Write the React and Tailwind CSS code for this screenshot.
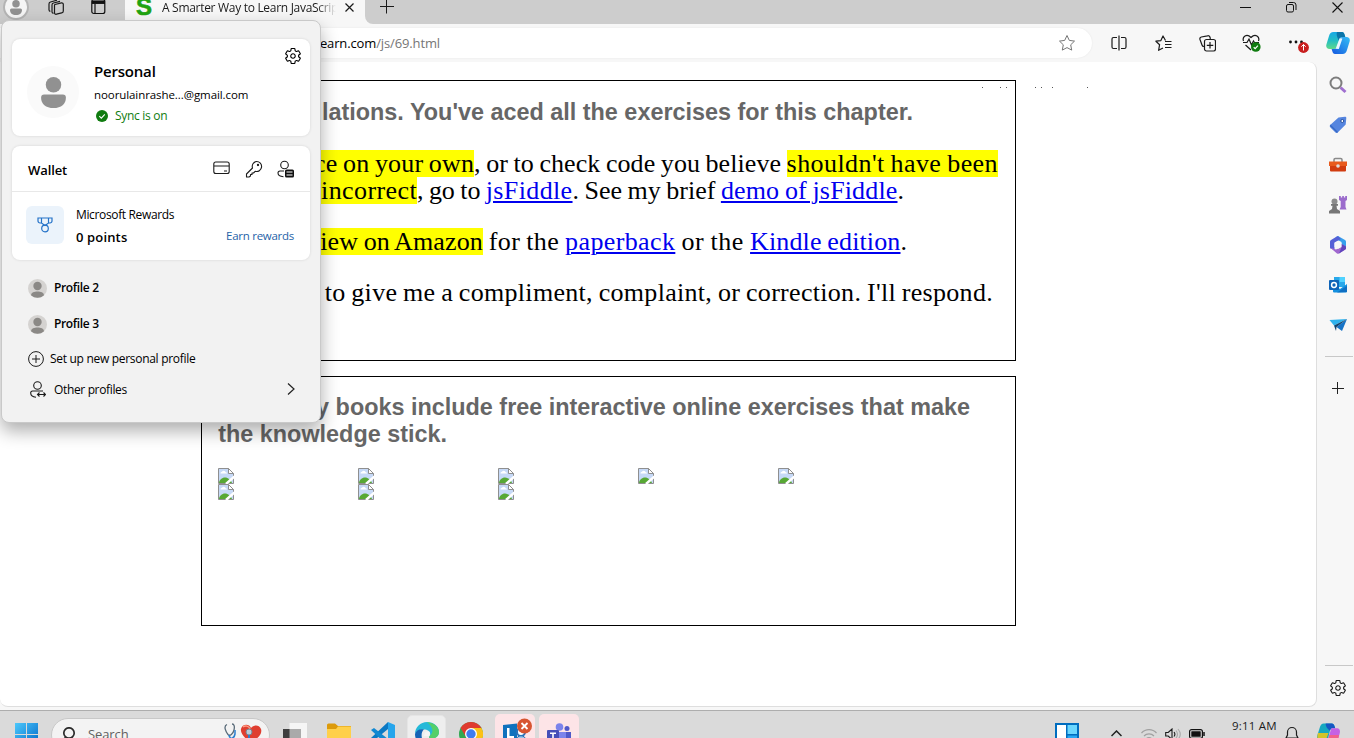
import React from "react";
import { IoSettingsOutline } from "react-icons/io5";

const ui = "font-['Open_Sans','Noto_Sans',sans-serif]";

function Avatar({ className }) {
  return (
    <svg className={className} viewBox="0 0 24 30">
      <circle cx="12" cy="7.500" r="7.500" fill="#919191" />
      <path d="M3 17h18a3 3 0 0 1 3 3c0 6-4.500 10-12 10S0 26 0 20a3 3 0 0 1 3-3z" fill="#919191" />
    </svg>
  );
}

function SmallAvatar() {
  return (
    <svg className="h-[19px] w-[19px] shrink-0" viewBox="0 0 19 19">
      <circle cx="9.500" cy="9.500" r="9.500" fill="#d5d3d1" />
      <circle cx="9.500" cy="7" r="4.200" fill="#8b8986" />
      <path d="M3 16.300a9.500 9.500 0 0 0 13 0C15.500 13.300 13 12.600 9.500 12.600S3.500 13.300 3 16.300z" fill="#8b8986" />
    </svg>
  );
}

function Copilot({ className }) {
  return (
    <svg className={className} viewBox="0 0 24 24">
      <defs>
        <linearGradient id="cpA" x1="0" y1="0" x2="0" y2="1">
          <stop offset="0" stopColor="#17a8e6" />
          <stop offset=".5" stopColor="#22bdc4" />
          <stop offset="1" stopColor="#5fd98a" />
        </linearGradient>
        <linearGradient id="cpB" x1="1" y1="0" x2="0" y2="1">
          <stop offset="0" stopColor="#35bdf5" />
          <stop offset="1" stopColor="#1659e0" />
        </linearGradient>
      </defs>
      <path d="M7.500 1h8.500c1.500 0 2 1 2.500 2.500L19.300 6h-3c-1.500 0-2.200.8-2.700 2.300l-2.400 7.200c-.6 1.700-1.600 2.500-3.200 2.500H3.500C.8 18-.3 16 .4 13.400L3 5C3.800 2.300 5 1 7.500 1z" fill="url(#cpA)" />
      <path d="M11 1h5c1.500 0 2 1 2.500 2.500L19.300 6h-3c-1.500 0-2.200.8-2.700 2.300L13 10C11 6 10 3 11 1z" fill="#0b74a8" />
      <path d="M16.500 23H9c-1.500 0-2.200-1-2.600-2.500L5.600 18H8c1.600 0 2.600-.8 3.200-2.500l2.400-7.200C14.100 6.800 14.800 6 16.300 6h4.200c2.700 0 3.800 2 3.100 4.600L21 19c-.8 2.700-2 4-4.500 4z" fill="url(#cpB)" />
      <path d="M9.700 17.800L13.600 7.200l2.800.2-3.600 10.600z" fill="#e9f7ff" />
    </svg>
  );
}

function TabBar() {
  return (
    <div className="flex h-6 shrink-0 overflow-hidden bg-[#f7f7f7]">
      <div className="flex w-[125px] gap-[18px] bg-[#cdcdcd] pl-[3px]">
        <div className="-mt-[6px] flex h-[26px] w-[26px] shrink-0 items-center justify-center rounded-full border-2 border-[#b4b4b4] bg-[#f5f5f5]">
          <Avatar className="h-[15px] w-[12px]" />
        </div>
        <svg className="h-4 w-[18px] shrink-0" viewBox="0 0 18 16" fill="none" stroke="#1b1b1b" strokeWidth="1.200">
          <path d="M8 4.500l6.500-1.600a1.500 1.500 0 0 1 1.800 1.500v6.500a2 2 0 0 1-1.600 2L9.500 14.200a1.500 1.500 0 0 1-2-1.500V5.500a1 1 0 0 1 .5-1zM5 12.500V5a2 2 0 0 1 1.500-2L13 1.300M2 10.500V4a2 2 0 0 1 1.500-2L10 .2M5 12.500l1.500 1M2 10.500l1.300 1" />
        </svg>
        <svg className="ml-[8px] h-[15px] w-[15px] shrink-0" viewBox="0 0 15 15" fill="none" stroke="#111" strokeWidth="1.200">
          <rect x=".8" y="-.5" width="13" height="14" rx="2" />
          <path d="M1 2.200h13" strokeWidth="3.500" />
          <path d="M4 4v9" />
        </svg>
      </div>
      <div className="flex w-[240px] pl-[11px] text-[#1b1b1b]">
        <div className="-mt-[9px] h-[30px] w-[19px] font-['Liberation_Sans',sans-serif] text-[24px] leading-[32px] font-bold text-[#1fa30f] [-webkit-text-stroke:0.6px_#1fa30f]">S</div>
        <div className={`${ui} ml-[7px] h-6 w-[174px] overflow-hidden text-[12px] leading-[15px] tracking-[-0.3px] whitespace-nowrap [mask-image:linear-gradient(to_right,black_155px,transparent)]`}>A Smarter Way to Learn JavaScript</div>
        <svg className="mt-[3px] ml-[9px] h-[9px] w-[9px]" viewBox="0 0 9 9" stroke="#1b1b1b" strokeWidth="1.200"><path d="M.5.500l8 8M8.500.500l-8 8" /></svg>
      </div>
      <div className="flex flex-1 rounded-bl-[8px] bg-[#cdcdcd] pl-[15px]">
        <svg className="h-[14px] w-[14px]" viewBox="0 0 14 14" stroke="#1b1b1b" strokeWidth="1"><path d="M0 6.500h14M6.500 0v13.500" /></svg>
        <svg className="mt-[2px] ml-auto h-[11px] w-[11px]" viewBox="0 0 11 11" stroke="#111" strokeWidth="1"><path d="M0 5.500h11" /></svg>
        <svg className="mt-px ml-[35px] h-[12px] w-[11px]" viewBox="0 0 11 12" fill="none" stroke="#111"><rect x=".5" y="3.500" width="7" height="7.500" rx="1.500" /><path d="M3 1.500h4.500a2.500 2.500 0 0 1 2.500 2.500v5" /></svg>
        <svg className="mt-[2px] mr-[11px] ml-[35px] h-[11px] w-[11px]" viewBox="0 0 11 11" stroke="#111" strokeWidth="1.100"><path d="M.5.500l10 10M10.500.500l-10 10" /></svg>
      </div>
    </div>
  );
}

function ToolBar() {
  return (
    <div className="flex h-[38px] shrink-0 items-center bg-[#f7f7f7]">
      <div className="flex h-[30px] w-[1092px] items-center rounded-r-full bg-white pr-[16px] shadow-[0_0_2px_rgba(0,0,0,0.08)]">
        <div className={`${ui} mt-[2px] w-[440px] text-right text-[13px] tracking-[-0.13px] whitespace-nowrap text-black`}>
          www.asmarterwaytolearn.com<span className="text-[#767676]">/js/69.html</span>
        </div>
        <svg className="ml-auto h-[18px] w-[18px]" viewBox="0 0 18 18" fill="none" stroke="#767676" strokeLinejoin="round"><path d="M9 1.500l2.300 4.900 5.200.7-3.800 3.700 1 5.300L9 13.600l-4.700 2.500 1-5.300L1.500 7.100l5.200-.7z" /></svg>
      </div>
      <div className="flex flex-1 items-center pl-[5px] text-[#1b1b1b]">
        <div className="flex w-[44px] justify-center">
          <svg className="h-4 w-4" viewBox="0 0 16 16" fill="none" stroke="#1b1b1b" strokeWidth="1.200"><path d="M6 2.500H2.500a1.500 1.500 0 0 0-1.500 1.500v8a1.500 1.500 0 0 0 1.500 1.500H6M10 2.500h3.500A1.500 1.500 0 0 1 15 4v8a1.500 1.500 0 0 1-1.500 1.500H10M8 .5v15" /></svg>
        </div>
        <div className="flex w-[45px] justify-center">
          <svg className="h-[17px] w-[17px]" viewBox="0 0 17 17" fill="none" stroke="#1b1b1b" strokeWidth="1.200" strokeLinejoin="round"><path d="M10.500 5.500L8 1 5.900 5.600l-5 .6 3.700 3.500-1 5.600L8 13M10 6.500h6.500M10 9.500h6.500M10 12.500h6.500" /></svg>
        </div>
        <div className="flex w-[43px] justify-center">
          <svg className="h-[17px] w-[17px]" viewBox="0 0 17 17" fill="none" stroke="#1b1b1b" strokeWidth="1.200"><path d="M5 11.500a2 2 0 0 1-2-1.500L1 4.500A2 2 0 0 1 2.300 2L8.500.8A2 2 0 0 1 11 2.500l.4 1.500" /><rect x="5.500" y="4.500" width="11" height="11.500" rx="2" /><path d="M11 7v6.500M7.800 10.300h6.500" /></svg>
        </div>
        <div className="flex w-[45px] justify-center">
          <svg className="h-[18px] w-[19px]" viewBox="0 0 19 18" fill="none" stroke="#1b1b1b" strokeWidth="1.200"><path d="M1.500 7C0 3 4.500-1 9 3.500 13.500-1 18 3 16.500 7M1 8.500h4L7 5l2.500 6L11.500 7l1 1.500H17M3.500 11l5.500 5" /><circle cx="13.800" cy="13" r="4.800" fill="#107c10" stroke="none" /><path d="M11.700 13.200l1.500 1.400 2.700-3" stroke="#fff" /></svg>
        </div>
        <svg className="ml-[13px] h-[20px] w-[22px] shrink-0" viewBox="0 0 22 20"><circle cx="3.500" cy="9" r="1.400" fill="#111" /><circle cx="9" cy="9" r="1.400" fill="#111" /><circle cx="14.500" cy="9" r="1.400" fill="#111" /><circle cx="16.500" cy="14.500" r="5.400" fill="#c81f1f" /><path d="M16.500 17.500v-6M14.300 13.700l2.200-2.200 2.200 2.200" stroke="#fff" fill="none" /></svg>
        <Copilot className="ml-[17px] h-6 w-6 shrink-0" />
      </div>
    </div>
  );
}

function BrokenImage() {
  return (
    <svg className="block h-4 w-4" viewBox="0 0 16 16">
      <path d="M.5.500h10l5 5v10H.5z" fill="#c6d9f7" stroke="#8f8f8f" />
      <path d="M10.500.500v5h5z" fill="#fff" stroke="#8f8f8f" />
      <path d="M2.500 5.500a1.500 1.500 0 0 1 1.500-1.700 2 2 0 0 1 3.700.4c1 0 1.300.6 1.300 1.300z" fill="#fff" />
      <path d="M1 15c0-3 3-5.500 6-5.500S13 12 14 15z" fill="#57a834" />
      <path d="M8 16L16.500 8.500" stroke="#fff" strokeWidth="2.500" />
    </svg>
  );
}

const head = "flex h-[27px] justify-end whitespace-nowrap font-['Liberation_Sans',sans-serif] text-[23.4px] font-bold leading-[27px] text-[#666]";
const line = "flex h-[27px] justify-end whitespace-pre font-['Liberation_Serif',serif] text-[26px] leading-[27px] text-black [word-spacing:-1px]";
const link = "text-[#0000ee] underline decoration-2 underline-offset-[2px]";

function Page() {
  return (
    <main className="relative w-[1317px] rounded-r-[8px] rounded-bl-[8px] border-r border-b border-[#dedede] bg-white pt-[18px] pl-[201px]">
      <section className="h-[281px] w-[815px] border border-black px-4 pt-[18px]">
        <div className={`${head} w-[695px]`}>Congratulations. You've aced all the exercises for this chapter.</div>
        <div className={`${line} mt-6 w-[780px]`}>
          <span className="bg-[#ff0] tracking-[0.15px]">To practice on your own</span><span className="tracking-[0.06px]">, or to check code you believe </span><span className="bg-[#ff0] tracking-[0.42px]">shouldn't have been</span>
        </div>
        <div className={`${line} w-[686px]`}>
          <span className="bg-[#ff0] tracking-[0.4px]">marked incorrect</span><span className="tracking-[-0.06px]">, go to </span><a className={`${link} tracking-[0.37px]`}>jsFiddle</a><span>. See my brief </span><a className={`${link} tracking-[0.15px]`}>demo of jsFiddle</a><span>.</span>
        </div>
        <div className={`${line} mt-6 w-[689px]`}>
          <span className="bg-[#ff0] tracking-[0.12px]">Write a review on Amazon</span><span className="tracking-[0.4px]"> for the </span><a className={`${link} tracking-[0.38px]`}>paperback</a><span className="tracking-[0.6px]"> or the </span><a className={`${link} tracking-[0.14px]`}>Kindle edition</a><span>.</span>
        </div>
        <div className={`${line} mt-6 w-[775px] tracking-[0.3px]`}>Email me to give me a compliment, complaint, or correction. I'll respond.</div>
      </section>
      <section className="mt-[15px] h-[250px] w-[815px] border border-black px-4 pt-[17px]">
        <div className={`${head} w-[752px]`}>All of my books include free interactive online exercises that make</div>
        <div className={`${head} w-[229px]`}>the knowledge stick.</div>
        <div className="mt-5 grid w-[700px] grid-cols-5">
          {[0, 1, 2, 3, 4, 5, 6, 7].map((i) => <BrokenImage key={i} />)}
        </div>
      </section>
      <svg className="absolute top-[25px] left-[982px] h-px w-[106px]" viewBox="0 0 106 1">
        <path d="M0 .5h1M18 .5h1M24 .5h1M53 .5h1M59 .5h1M70 .5h1M105 .5h1" stroke="#555" />
      </svg>
    </main>
  );
}

function SideBar() {
  const row = "flex h-10 shrink-0 items-center justify-center";
  const ic = "h-[18px] w-[18px]";
  return (
    <aside className="flex flex-1 flex-col bg-[#f7f7f7] pt-[3px] pl-[5px]">
      <div className={row}><svg className={`${ic} -mt-px`} viewBox="0 0 18 18" fill="none"><path d="M11.500 11.500l5 4.500" stroke="#a06fd0" strokeWidth="3" /><circle cx="7" cy="7" r="5.500" stroke="#7d7d7d" strokeWidth="2" /></svg></div>
      <div className={row}><svg className={ic} viewBox="0 0 18 18"><path d="M9.500 1.500L16 .8a1.200 1.200 0 0 1 1.300 1.300l-.6 6.400-8 8a1.500 1.500 0 0 1-2.200 0L1.200 11.200a1.500 1.500 0 0 1 0-2.200z" fill="#5585df" /><path d="M1 10l7 6.800 1-.7-7.500-7.500z" fill="#3668c4" /><circle cx="13.300" cy="5" r="1.500" fill="#fff" stroke="#204b9b" /></svg></div>
      <div className={row}><svg className={ic} viewBox="0 0 18 18"><path d="M5 6V3.800A1.300 1.300 0 0 1 6.300 2.500h5.400A1.300 1.300 0 0 1 13 3.800V6" fill="none" stroke="#8a8a8a" strokeWidth="1.500" /><path d="M0 5.500h18V10H0z" fill="#e85a1d" /><path d="M1 10h16v4.500a1 1 0 0 1-1 1H2a1 1 0 0 1-1-1z" fill="#d13c10" /><circle cx="9" cy="10" r="1.800" fill="#dedede" /></svg></div>
      <div className={row}><svg className={ic} viewBox="0 0 18 18"><path d="M10 0h1.800v1.500h1.400V0h1.700v1.500h1.300V0H18v4l-1.500 1v6l1 2.500h-7l1.200-2.500V5L10 4z" fill="#9b6ccc" /><circle cx="5.500" cy="5.500" r="3" fill="#8b8b8b" /><path d="M2 8h7v1.800H7.500L8 13l3 2v2.500H0V15l3-2 .5-3.200H2z" fill="#777" /></svg></div>
      <div className={row}><svg className={ic} viewBox="0 0 18 18"><path d="M9 0l7 4a2 2 0 0 1 1 1.800V11l-4.500-2.600V6L6 2.500C7 1 8 .3 9 0z" fill="#36a0ed" /><path d="M7 1L2 4a2 2 0 0 0-1 1.800v6.400L5.500 14V6.500L12 3 9.500.5C8.500 0 8 .4 7 1z" fill="#5460d6" /><path d="M1 11.500L8 17.400a2 2 0 0 0 2 0l6-3.600a2 2 0 0 0 1-1.800v-1.500L12.500 8v2.500L7 13.500z" fill="#a068cf" /><path d="M12.500 8l4.500 2.500V13l-7 4.500 2.500-6z" fill="#6046bd" /><path d="M9 5l3.500 2v4L9 13l-3.500-2V7z" fill="#f7f7f7" /></svg></div>
      <div className={row}><svg className={ic} viewBox="0 0 18 18"><path d="M5 1h11v10H5z" fill="#28a8ea" /><path d="M10.500 1H16v5h-5.500z" fill="#50d2ff" /><path d="M4 8l7 5 7-5v7.500a1 1 0 0 1-1 1H5a1 1 0 0 1-1-1z" fill="#1490df" /><path d="M8 16.500L18 10v6z" fill="#0f6fc3" /><rect x="0" y="4" width="10" height="10" rx="1" fill="#0f64b8" /><circle cx="5" cy="9" r="2.400" fill="none" stroke="#fff" strokeWidth="1.500" /></svg></div>
      <div className={row}><svg className={ic} viewBox="0 0 18 18"><path d="M.5 4L18 3 5 9.500z" fill="#2fb2ed" /><path d="M18 3L13 15 7.500 11z" fill="#1673c7" /><path d="M5 9.500L18 3 7.500 11 7 15z" fill="#11446f" /></svg></div>
      <div className="mt-[11px] ml-[3px] h-px w-[28px] shrink-0 bg-[#c8c8c8]" />
      <div className="mt-[11px] flex h-10 items-center justify-center"><svg className="h-3 w-3" viewBox="0 0 12 12" stroke="#222" strokeWidth="1"><path d="M0 6.500h12M5.500 0v12" /></svg></div>
      <div className="mt-auto ml-[3px] h-px w-[28px] shrink-0 bg-[#c8c8c8]" />
      <div className="-mb-[2px] flex h-[43px] items-center justify-center"><IoSettingsOutline className="h-[18px] w-[18px] text-[#1b1b1b]" /></div>
    </aside>
  );
}

function ProfileMenu() {
  return (
    <div className={`${ui} absolute top-[20px] left-[1px] flex h-[403px] w-[320px] flex-col rounded-[8px] border border-[#c9c9c9] bg-[#f2f2f2] px-[10px] pt-[18px] text-[12px] whitespace-nowrap text-black shadow-[0_8px_18px_rgba(0,0,0,0.32)]`}>
      <div className="flex h-[97px] shrink-0 rounded-[8px] bg-white pl-[15px] shadow-[0_0_3px_rgba(0,0,0,0.12)]">
        <div className="mt-[27px] flex h-[52px] w-[52px] items-center justify-center rounded-full bg-[#fafafa]"><Avatar className="h-[31px] w-[25px]" /></div>
        <div className="ml-[15px] pt-[22px]">
          <div className="text-[15px] leading-[21px] font-semibold tracking-[-0.2px]">Personal</div>
          <div className="mt-[5px] text-[11.500px] leading-[16px] tracking-[-0.08px]">noorulainrashe...@gmail.com</div>
          <div className="mt-[5px] flex items-center leading-[16px] tracking-[-0.3px] text-[#107c10]">
            <svg className="mr-[7px] ml-[2px] h-3 w-3" viewBox="0 0 12 12"><circle cx="6" cy="6" r="6" fill="#107c10" /><path d="M3.300 6.200l2 1.900 3.500-3.800" fill="none" stroke="#fff" strokeWidth="1.100" /></svg>Sync is on
          </div>
        </div>
        <IoSettingsOutline className="mt-[8px] mr-[8px] ml-auto h-[18px] w-[18px]" />
      </div>
      <div className="mt-[10px] h-[114px] shrink-0 rounded-[8px] bg-white shadow-[0_0_3px_rgba(0,0,0,0.12)]">
        <div className="flex h-[46px] items-center border-b border-[#e8e8e8] pr-4 pl-4">
          <span className="mt-[5px] text-[13px] font-semibold tracking-[-0.1px]">Wallet</span>
          <svg className="-mt-px ml-auto h-4 w-[17px]" viewBox="0 0 17 16" fill="none" stroke="#1b1b1b" strokeWidth="1.100"><rect x=".8" y="2" width="15.400" height="11.500" rx="2" /><path d="M1 6h15M11 11h3" /></svg>
          <svg className="ml-[15px] h-[18px] w-[18px]" viewBox="0 0 18 18" fill="none" stroke="#1b1b1b" strokeWidth="1.100" strokeLinejoin="round"><path d="M11.500 1.500a5 5 0 1 1-1.300 9.800L8.500 13H7v1.500H5.500V16L4 17H1.500v-3l6-6a5 5 0 0 1 4-6.500z" /><circle cx="13" cy="5" r=".6" fill="#111" /></svg>
          <svg className="ml-[14px] h-[18px] w-[17px]" viewBox="0 0 17 18" fill="none" stroke="#1b1b1b" strokeWidth="1.100"><circle cx="7.500" cy="5" r="3.800" /><path d="M7 11H3a2 2 0 0 0-2 2c0 2 2 3.500 5.500 3.700" /><rect x="8" y="9.500" width="9" height="8" rx="1.500" fill="#111" stroke="none" /><path d="M9.500 12h6M9.500 15h6" stroke="#fff" /></svg>
        </div>
        <div className="flex pt-[14px] pr-4 pl-[14px]">
          <div className="flex h-[38px] w-[38px] items-center justify-center rounded-[6px] bg-[#ebf3fb]">
            <svg className="-mt-px h-4 w-4" viewBox="0 0 16 16" fill="none" stroke="#2472c8" strokeWidth="1.200"><path d="M1 1h14v3a2 2 0 0 1-2 2h-1.500L8 8.500 4.500 6H3a2 2 0 0 1-2-2zM4.500 1v5M11.500 1v5" /><circle cx="8" cy="11.500" r="3.300" /></svg>
          </div>
          <div className="ml-3 pt-px">
            <div className="leading-[16px] tracking-[-0.35px]">Microsoft Rewards</div>
            <div className="mt-[5px] text-[13px] leading-[18px] font-semibold tracking-[0.15px]">0 points</div>
          </div>
          <div className="mt-[22px] ml-auto text-[11.500px] leading-[16px] tracking-[-0.27px] text-[#1f63a8]">Earn rewards</div>
        </div>
      </div>
      <div className="flex flex-col pl-4">
        <div className="mt-[19px] flex h-[18px] items-center gap-[7px] font-semibold tracking-[-0.35px]"><SmallAvatar />Profile 2</div>
        <div className="mt-[18px] flex h-[18px] items-center gap-[7px] font-semibold tracking-[-0.35px]"><SmallAvatar />Profile 3</div>
        <div className="mt-[17px] flex h-[18px] items-center gap-[6px] tracking-[-0.3px]">
          <svg className="-mt-px h-4 w-4" viewBox="0 0 16 16" fill="none" stroke="#1b1b1b"><circle cx="8" cy="8" r="7.400" /><path d="M8 4v8M4 8h8" /></svg>Set up new personal profile
        </div>
        <div className="mt-[13px] flex h-[18px] items-center pr-[15px] tracking-[-0.35px]">
          <svg className="-mt-px mr-[8px] ml-[2px] h-[17px] w-4" viewBox="0 0 16 17" fill="none" stroke="#1b1b1b" strokeWidth="1.100"><circle cx="7.500" cy="4.500" r="3.800" /><path d="M13 10H2.500A1.800 1.800 0 0 0 .7 12c0 2.500 2 4 5.300 4.300M7.500 13.500h8M9.500 11.500l-2 2 2 2M13.500 11.500l2 2-2 2" /></svg>Other profiles
          <svg className="-mt-[2px] ml-auto h-3 w-[8px]" viewBox="0 0 8 12" fill="none" stroke="#222" strokeWidth="1.200"><path d="M1 .5L7 6l-6 5.500" /></svg>
        </div>
      </div>
    </div>
  );
}

function TaskBar() {
  return (
    <footer className="flex h-[28px] shrink-0 overflow-hidden border-t border-[#adadad] bg-[#dadada]">
      <svg className="mt-3 ml-[15px] h-[23px] w-[23px] shrink-0" viewBox="0 0 23 23"><defs><linearGradient id="wn" x1="0" y1="0" x2="1" y2="1"><stop offset="0" stopColor="#4cc8fb" /><stop offset="1" stopColor="#0067c8" /></linearGradient></defs><path d="M0 0h11v11H0zM12 0h11v11H12zM0 12h11v11H0zM12 12h11v11H12z" fill="url(#wn)" /></svg>
      <div className="mt-[7px] ml-[13px] flex h-[34px] w-[219px] shrink-0 rounded-full border border-[#c8c8c8] bg-[#f3f3f3] pl-[10px]">
        <svg className="mt-[8px] h-[15px] w-[15px]" viewBox="0 0 15 15" fill="none" stroke="#2b2b2b" strokeWidth="1.700"><circle cx="7" cy="6" r="5.200" /><path d="M3.500 10.500L0 14" /></svg>
        <span className={`${ui} mt-[5px] ml-[11px] text-[13px] leading-[20px] tracking-[-0.1px] text-[#606060]`}>Search</span>
        <svg className="mt-[4px] ml-auto h-[20px] w-[39px]" viewBox="0 0 39 20" fill="none"><path d="M3 1.500C-1 3 2 9 4 11.500c2 2 5-.5 6-4.500.7-3 .5-6-2-6" stroke="#596b79" strokeWidth="1.300" /><path d="M5 12c1 5 5 4 6-1V7" stroke="#2b7fd0" strokeWidth="1.500" /><path d="M27 20c-5-4-11-9-10-14s8-6 10-1c2-3 8-4 10 1 2 6-6 11-10 14z" fill="#df3e30" /><path d="M19 4c2-2 6-1 7 2" stroke="#ff9d84" strokeWidth="1.500" /><circle cx="25" cy="9" r="3" fill="#bacbd7" stroke="#778690" /><path d="M25 12v7" stroke="#2b7fd0" strokeWidth="2" /></svg>
        <div className="w-[6px]" />
      </div>
      <svg className="mt-3 ml-[13px] h-6 w-6 shrink-0" viewBox="0 0 24 24"><path d="M6.500 0H24v17H6.500z" fill="#f5f5f5" /><path d="M0 6h18v17H0z" fill="#3f3f3f" /><path d="M6.500 6H18v11H6.500z" fill="#aaa" /></svg>
      <svg className="mt-3 ml-[20px] h-6 w-6 shrink-0" viewBox="0 0 24 24"><path d="M0 2a1.500 1.500 0 0 1 1.500-1.500H8L11 3h13v5H0z" fill="#dc9a0b" /><path d="M0 6h9l2-2.500h13V20H0z" fill="#ffd04a" /></svg>
      <svg className="mt-[11px] ml-[20px] h-6 w-6 shrink-0" viewBox="0 0 24 24"><path d="M17 0l7 3v18l-7 3z" fill="#26a5ec" /><path d="M17 0v7L3 18.500 0 16z" fill="#0b79c4" /><path d="M0 8l3-2 14 11v7z" fill="#1188d2" /></svg>
      <div className="mt-1 ml-[12px] flex h-[40px] w-[39px] shrink-0 justify-center rounded-[5px] border border-[#e5e5e5] bg-[#eeeeee] pt-[6px]">
        <svg className="h-6 w-6" viewBox="0 0 24 24"><path d="M12 0c7 0 12 4.500 12 10 0 4-3 6.500-7 6.500-3 0-3.500-1-2-3 1-4-2-6-6-6C4 7.500 1 9 0 12 0 5 5.500 0 12 0z" fill="#25b9d8" /><path d="M17 1.200C21 3 24 6 24 10c0 4-3 6.500-7 6.500-3 0-3.500-1-2-3C19 10 18 5 12 0z" fill="#54cf68" /><path d="M0 12c1-4 5-5.500 9-4.500-4 3-3 12 3 16.500C5 24 0 19 0 12z" fill="#1563b5" /><path d="M10 11c1-2 4-2 5 0l-1 3H9z" fill="#f5f5f5" /></svg>
      </div>
      <svg className="mt-[11px] ml-[13px] h-6 w-6 shrink-0" viewBox="0 0 24 24"><circle cx="12" cy="12" r="12" fill="#32a852" /><path d="M1.600 6A12 12 0 0 1 22.400 6H12L7 15z" fill="#df3a2e" /><path d="M22.400 6A12 12 0 0 1 12 24l5-9-5-9z" fill="#fbc116" /><circle cx="12" cy="12" r="6" fill="#fff" /><circle cx="12" cy="12" r="4.700" fill="#3f7cf0" /></svg>
      <div className="mt-[3px] ml-[12px] h-[40px] w-[40px] shrink-0 rounded-[5px] bg-[#fde4e7] pt-[3px] pl-[8px]">
        <svg className="h-[29px] w-[30px]" viewBox="0 0 30 29"><path d="M0 8l14-1.500V28L0 25z" fill="#1071bd" /><path d="M4 11h2.500v8H11v2.300H4z" fill="#fff" /><circle cx="18" cy="15" r="4" fill="#fff" stroke="#2a72b9" strokeWidth="2" /><path d="M13 24c0-7 10-7 10 0" fill="#9fc5e7" stroke="#1d70b5" /><circle cx="21.500" cy="9" r="7.500" fill="#d75531" /><path d="M18.500 6l6 6M24.500 6l-6 6" stroke="#fff" strokeWidth="1.800" /></svg>
      </div>
      <div className="mt-[3px] ml-1 h-[40px] w-[40px] shrink-0 rounded-[5px] bg-[#fde4e7] pt-[9px] pl-2">
        <svg className="h-6 w-6" viewBox="0 0 24 24"><circle cx="12.500" cy="4" r="3.800" fill="#7b83eb" /><circle cx="20" cy="5.500" r="2.500" fill="#5059c9" /><path d="M17 9h7v8a5 5 0 0 1-7 3z" fill="#5059c9" /><path d="M7 9h12v10a6 6 0 0 1-12 0z" fill="#7b83eb" /><rect x="0" y="7" width="12" height="13" rx="1" fill="#464eb8" /><path d="M3 10.300h6M6 10v7" stroke="#fff" strokeWidth="1.600" /></svg>
      </div>
      <svg className="mt-3 ml-auto h-6 w-6 shrink-0" viewBox="0 0 24 24"><path d="M0 0h24v24H0z" fill="#006dbf" /><path d="M2 2h9v20H2z" fill="#fff" /><path d="M12.500 2H22v9h-9.500z" fill="#6bd7ff" /><path d="M12.500 12.500H22V22h-9.500z" fill="#27a8f5" /></svg>
      <svg className="mt-[19px] ml-[32px] h-[7px] w-[11px] shrink-0" viewBox="0 0 11 7" fill="none" stroke="#222" strokeWidth="1.500"><path d="M.5 6l5-5 5 5" /></svg>
      <svg className="mt-[17px] ml-[19px] h-[14px] w-4 shrink-0" viewBox="0 0 16 14" fill="none" stroke="#a0a0a0" strokeWidth="1.200"><path d="M.5 5a10 10 0 0 1 15 0M3 8a7 7 0 0 1 10 0M5.500 10.500a4 4 0 0 1 5 0" /></svg>
      <svg className="mt-[17px] ml-[8px] h-[13px] w-4 shrink-0" viewBox="0 0 16 13" fill="none" stroke="#1b1b1b" strokeWidth="1.100"><path d="M.7 4.500h2.500L7 1v10.500L3.200 8H.7zM9 4c1.200 1.500 1.200 3 0 4.500" /><path d="M11 2.500c2 2.500 2 5 0 7.500M13 1c3 3.500 3 7 0 10.500" stroke="#aaa" /></svg>
      <svg className="mt-[18px] ml-[8px] h-[10px] w-4 shrink-0" viewBox="0 0 16 10"><rect x=".6" y=".6" width="12.800" height="8.800" rx="2" fill="none" stroke="#111" strokeWidth="1.200" /><rect x="2.300" y="2.300" width="9.400" height="5.400" rx=".5" fill="#111" /><path d="M15 3v4" stroke="#111" strokeWidth="1.500" /></svg>
      <span className={`${ui} mt-[7px] ml-[27px] w-[45px] shrink-0 text-[11.500px] leading-[16px] tracking-[0.2px] whitespace-nowrap text-[#1b1b1b]`}>9:11 AM</span>
      <svg className="mt-[15px] ml-[8px] h-4 w-[14px] shrink-0" viewBox="0 0 14 16" fill="none" stroke="#1b1b1b" strokeWidth="1.200"><path d="M1 12h12l-1.500-3V6a4.500 4.500 0 0 0-9 0v3z" /></svg>
      <svg className="mt-3 mr-[14px] ml-[18px] h-6 w-[23px] shrink-0" viewBox="0 0 24 24"><path d="M7 0h8c2 0 3 1 4 5h-3c-1.500 0-2 1-2.500 2.500L11 18H3c-3 0-3.500-3-2.500-6L3 4c.7-2.500 2-4 4-4z" fill="#16a8c0" /><path d="M9 0h6c2 0 3 1 4 5h-3c-1.500 0-2 1-2.500 2.500C11 6 9 3 9 0z" fill="#1657c3" /><path d="M1 10h11l-3 8H3c-3 0-3-4-2-8z" fill="#d3c42a" /><path d="M15 5h6c3 0 3.500 3 2.500 6L21 20c-1 3-2 4-5 4H9z" fill="#c462e5" /><path d="M13 12h10l-2 8c-1 3-2 4-5 4H9z" fill="#f2608c" /></svg>
    </footer>
  );
}

export default function App() {
  return (
    <div className="relative flex h-[738px] w-[1354px] flex-col overflow-hidden bg-[#f7f7f7]">
      <TabBar />
      <ToolBar />
      <div className="flex h-[645px] shrink-0"><Page /><SideBar /></div>
      <div className="h-[3px] shrink-0 bg-[#f7f7f7]" />
      <TaskBar />
      <ProfileMenu />
    </div>
  );
}
